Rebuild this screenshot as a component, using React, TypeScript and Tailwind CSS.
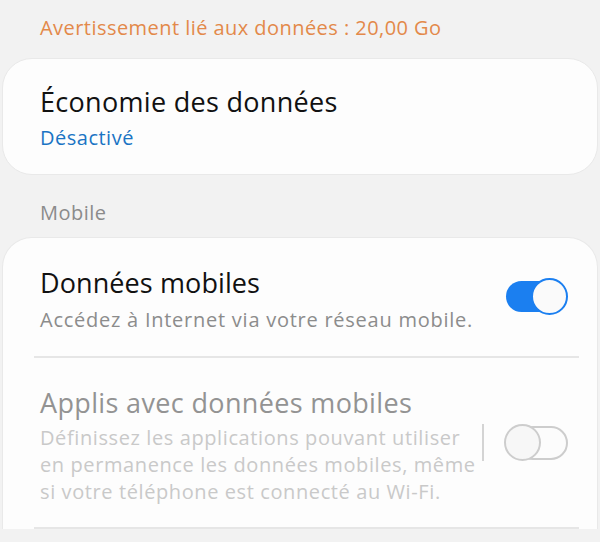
import React from 'react';

function ToggleOn() {
  return (
    <div className="relative h-[37px] w-[62px] shrink-0">
      <div className="absolute left-0 top-[3px] h-[31px] w-[50px] rounded-full bg-[#1b7ff0]" />
      <div className="absolute right-0 top-0 h-[37px] w-[37px] rounded-full border-2 border-[#1b7ff0] bg-[#fafafa]" />
    </div>
  );
}

function ToggleOff() {
  return (
    <div className="relative h-[37px] w-[64px] shrink-0">
      <div className="absolute right-0 top-[2px] h-[34px] w-[52px] rounded-full border-2 border-[#cdcdcd] bg-[#fcfcfc]" />
      <div className="absolute left-0 top-0 h-[37px] w-[37px] rounded-full border-2 border-[#cdcdcd] bg-[#f7f7f7]" />
    </div>
  );
}

export default function App() {
  return (
    <div className="h-[542px] w-[600px] overflow-hidden bg-[#f2f2f2] font-['Open_Sans',sans-serif]">
      <div className="pl-[40px] pt-[16px] text-[20px] leading-[24px] tracking-[0.45px] text-[#e3894a]">
        Avertissement lié aux données : 20,00 Go
      </div>

      <div className="mx-[2px] mt-[18px] h-[117px] rounded-[30px] border border-[#e9e9e9] bg-[#fdfdfd] px-[37px] pt-[27px]">
        <div className="text-[27px] leading-[32px] tracking-[0.3px] text-[#111]">Économie des données</div>
        <div className="mt-[8px] text-[20px] leading-[24px] tracking-[0.5px] text-[#1a74c4]">Désactivé</div>
      </div>

      <div className="mt-[26px] pl-[40px] text-[20px] leading-[24px] tracking-[0.5px] text-[#8b8b8b]">Mobile</div>

      <div className="mx-[2px] mt-[12px] rounded-t-[30px] border border-b-0 border-[#e9e9e9] bg-[#fdfdfd]">
        <div className="flex items-center justify-between pb-[24px] pl-[37px] pr-[29px] pt-[29px]">
          <div>
            <div className="text-[27px] leading-[32px] tracking-[0.1px] text-[#111]">Données mobiles</div>
            <div className="mt-[9px] text-[20px] leading-[24px] tracking-[0.75px] text-[#8c8c8c]">
              Accédez à Internet via votre réseau mobile.
            </div>
          </div>
          <div className="-mt-[6px]">
            <ToggleOn />
          </div>
        </div>
        <div className="ml-[31px] mr-[18px] h-[2px] bg-[#e6e6e6]" />

        <div className="flex items-center justify-between pb-[22px] pl-[37px] pr-[29px] pt-[29px]">
          <div>
            <div className="text-[27px] leading-[32px] tracking-[0.35px] text-[#939393]">Applis avec données mobiles</div>
            <div className="mt-[5px] whitespace-nowrap text-[20px] leading-[27px] tracking-[0.6px] text-[#c9c9c9]">
              Définissez les applications pouvant utiliser
              <br />
              en permanence les données mobiles, même
              <br />
              si votre téléphone est connecté au Wi-Fi.
            </div>
          </div>
          <div className="-mt-[8px] flex items-center gap-[20px]">
            <div className="h-[37px] w-[2px] bg-[#d4d4d4]" />
            <ToggleOff />
          </div>
        </div>
        <div className="ml-[31px] mr-[18px] h-[2px] bg-[#e6e6e6]" />
      </div>
    </div>
  );
}
